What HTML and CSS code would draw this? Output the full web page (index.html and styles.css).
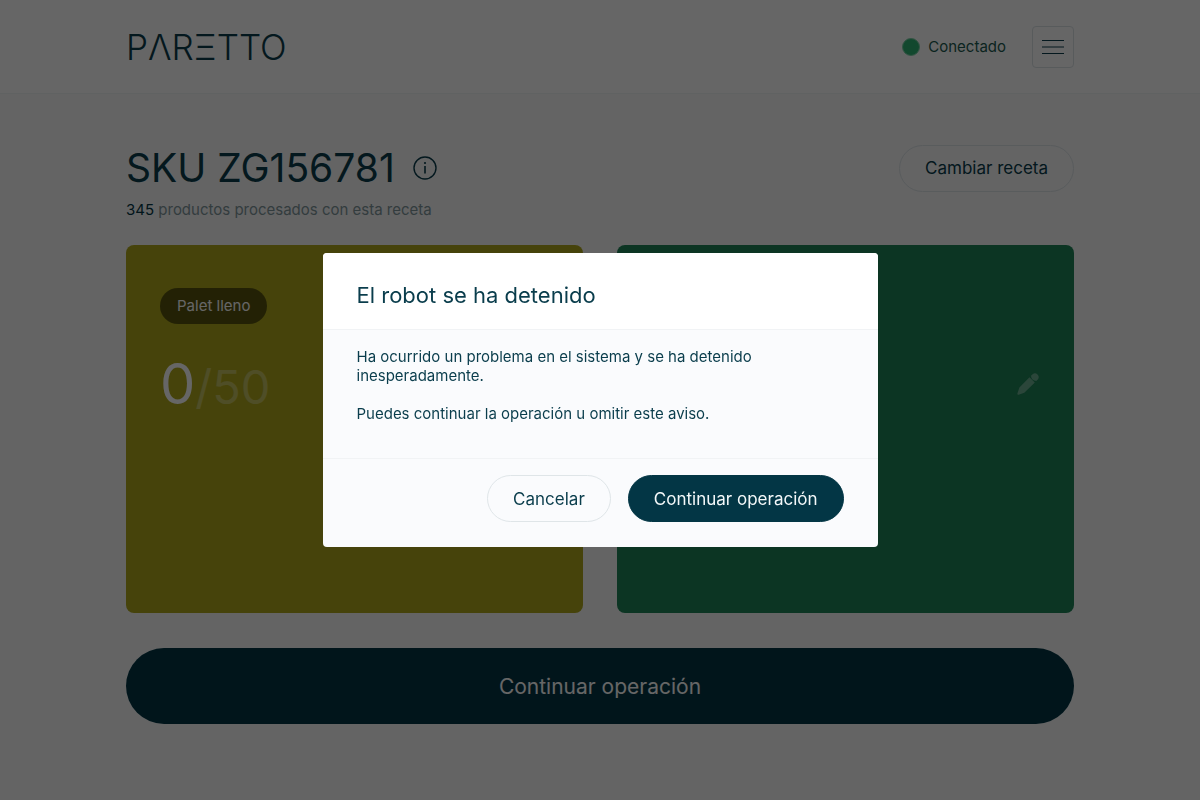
FILE: index.html
```html
<!DOCTYPE html>
<html lang="es">
<head>
  <meta charset="UTF-8">
  <meta name="viewport" content="width=device-width, initial-scale=1">
  <title>Paretto</title>
  <link rel="stylesheet" href="styles.css">
</head>
<body>

  <header class="topbar">
    <div class="container topbar-inner">
      <a class="logo" href="#" aria-label="Paretto">PΛRΞTTO</a>
      <div class="topbar-right">
        <div class="status"><span class="status-dot"></span>Conectado</div>
        <button class="menu-btn" type="button" aria-label="Menú">
          <svg width="24" height="16" viewBox="0 0 24 16" fill="none" stroke="currentColor" stroke-width="1.2">
            <path d="M1 1.5h22M1 8h22M1 14.5h22"/>
          </svg>
        </button>
      </div>
    </div>
  </header>

  <main class="container">
    <div class="heading">
      <div class="heading-title">
        <h1>SKU ZG156781</h1>
        <button class="info-btn" type="button" aria-label="Información">
          <svg width="24" height="24" viewBox="0 0 24 24" fill="none" stroke="currentColor" stroke-width="1.4">
            <circle cx="12" cy="12" r="11"/>
            <path d="M12 10v7.5" stroke-width="1.6"/>
            <circle cx="12" cy="7" r="1.1" fill="currentColor" stroke="none"/>
          </svg>
        </button>
      </div>
      <button class="btn" type="button">Cambiar receta</button>
    </div>
    <p class="processed"><strong>345</strong> productos procesados con esta receta</p>

    <div class="pallets">
      <section class="pallet pallet-full">
        <span class="tag">Palet lleno</span>
        <p class="count">0<span class="count-total">/50</span></p>
      </section>
      <section class="pallet pallet-active">
        <button class="edit-btn" type="button" aria-label="Editar">
          <svg width="24" height="24" viewBox="0 0 24 24" fill="currentColor">
            <path d="M13.5 5.2l5.3 5.3L8.3 20.7 2.7 22.7a1 1 0 0 1-1.3-1.3l2-6z"/>
            <path d="M15 3.7l1.6-1.5a3.7 3.7 0 0 1 5.2 5.2l-1.5 1.6a5.6 5.6 0 0 1-5.3-5.3z"/>
          </svg>
        </button>
      </section>
    </div>

    <button class="btn-main" type="button">Continuar operación</button>
  </main>

  <div class="overlay">
    <div class="modal" role="dialog" aria-modal="true" aria-labelledby="modalTitle">
      <div class="modal-header">
        <h2 id="modalTitle">El robot se ha detenido</h2>
      </div>
      <div class="modal-body">
        <p>Ha ocurrido un problema en el sistema y se ha detenido inesperadamente.</p>
        <p>Puedes continuar la operación u omitir este aviso.</p>
      </div>
      <div class="modal-footer">
        <button class="btn" type="button">Cancelar</button>
        <button class="btn btn-primary" type="button">Continuar operación</button>
      </div>
    </div>
  </div>

</body>
</html>
```
FILE: styles.css
```css
* {
  box-sizing: border-box;
}
body {
  margin: 0;
  min-height: 100vh;
  font-family: 'Inter', sans-serif;
  font-size: 15px;
  color: #0a3d4c;
  background: #f9fafb;
}
h1, h2, p {
  margin: 0;
  font-weight: 400;
}
button {
  font-family: inherit;
  color: inherit;
  cursor: pointer;
}
svg {
  display: block;
}
.container {
  width: 79%;
  margin: 0 auto;
}

/* top bar */
.topbar {
  background: #fff;
  border-bottom: 1px solid #f1f4f5;
}
.topbar-inner {
  display: flex;
  align-items: center;
  justify-content: space-between;
  height: 93px;
}
.logo {
  font-size: 35px;
  font-weight: 300;
  color: inherit;
  text-decoration: none;
}
.topbar-right {
  display: flex;
  align-items: center;
  gap: 26px;
}
.status {
  display: flex;
  align-items: center;
  gap: 8px;
  color: #1c5a50;
}
.status-dot {
  width: 18px;
  height: 18px;
  border-radius: 50%;
  background: #2fb574;
  border: 1px solid #7fd0a8;
}
.menu-btn {
  padding: 12px 8px;
  background: none;
  border: 1px solid #dde4e6;
  border-radius: 4px;
}

/* recipe heading */
.heading {
  display: flex;
  align-items: center;
  justify-content: space-between;
  margin-top: 50px;
}
.heading-title {
  display: flex;
  align-items: center;
  gap: 18px;
}
h1 {
  font-size: 39px;
  line-height: 48px;
}
.info-btn, .edit-btn {
  padding: 0;
  background: none;
  border: 0;
}
.btn {
  height: 47px;
  padding: 0 25px;
  font-size: 17px;
  background: none;
  border: 1px solid #dfe5e8;
  border-radius: 24px;
}
.btn-primary {
  color: #f4f8f9;
  background: #033645;
  border-color: #033645;
}
.processed {
  margin-top: 8px;
  line-height: 19px;
  color: #81979c;
}
.processed strong {
  font-weight: 400;
  color: #033645;
}

/* pallet cards */
.pallets {
  display: grid;
  grid-template-columns: 1fr 1fr;
  gap: 34px;
  margin-top: 26px;
}
.pallet {
  min-height: 368px;
  padding: 43px 34px;
  border-radius: 8px;
  color: #fff;
}
.pallet-full {
  background: #aea81c;
}
.pallet-active {
  display: flex;
  justify-content: flex-end;
  background: #1e8457;
}
.tag {
  display: inline-block;
  padding: 0 17px;
  line-height: 36px;
  border-radius: 18px;
  background: rgba(0, 0, 0, 0.5);
}
.count {
  margin-top: 24px;
  font-size: 56px;
  line-height: 72px;
}
.count-total {
  font-size: 47px;
  opacity: 0.3;
}
.edit-btn {
  align-self: flex-start;
  margin-top: 84px;
  color: rgba(255, 255, 255, 0.35);
}

.btn-main {
  display: block;
  width: 100%;
  height: 76px;
  margin-top: 35px;
  font-size: 21px;
  color: #fff;
  background: #033645;
  border: 0;
  border-radius: 38px;
}

/* modal */
.overlay {
  position: fixed;
  inset: 0;
  display: flex;
  align-items: center;
  justify-content: center;
  background: rgba(0, 0, 0, 0.6);
}
.modal {
  width: 555px;
  max-width: 90%;
  overflow: hidden;
  background: #fafbfd;
  border-radius: 4px;
}
.modal-header {
  padding: 28px 34px 20px;
  background: #fff;
  border-bottom: 1px solid #f1f3f5;
}
.modal-header h2 {
  font-size: 22px;
  line-height: 28px;
}
.modal-body {
  padding: 17px 34px 35px;
  line-height: 19px;
}
.modal-body p + p {
  margin-top: 19px;
}
.modal-footer {
  display: flex;
  justify-content: flex-end;
  gap: 17px;
  padding: 16px 34px 25px;
  border-top: 1px solid #f1f3f5;
}
```
